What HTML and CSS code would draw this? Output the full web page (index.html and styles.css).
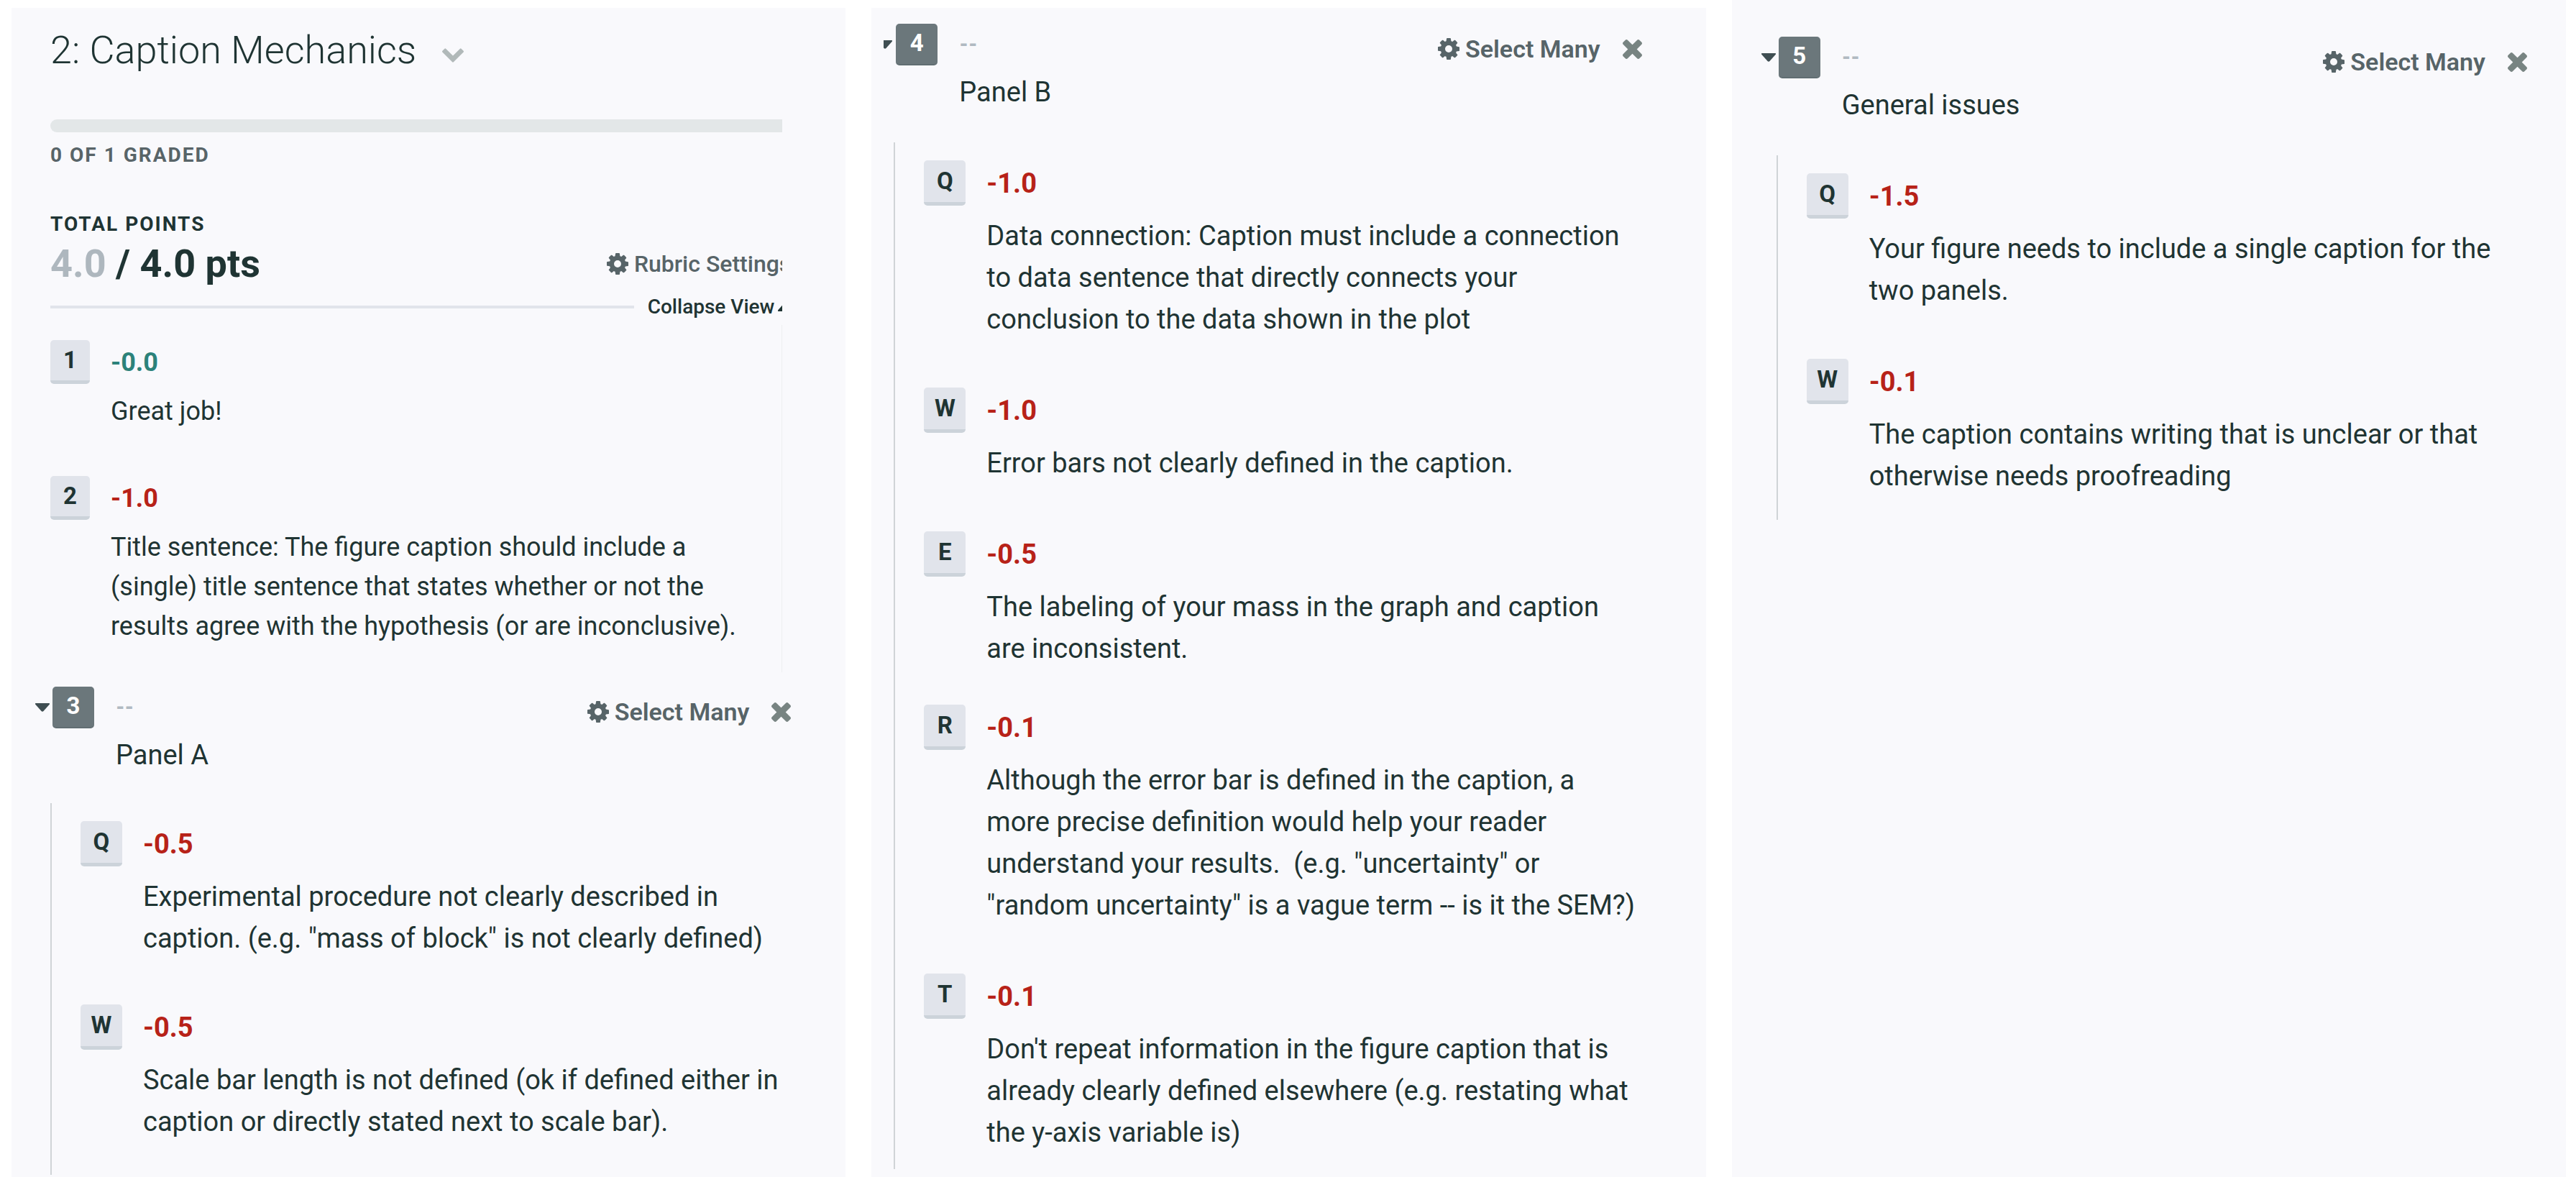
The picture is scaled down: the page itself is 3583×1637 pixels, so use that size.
FILE: index.html
```html
<!DOCTYPE html>
<html lang="en">
<head>
<meta charset="utf-8">
<title>2: Caption Mechanics</title>
<link rel="stylesheet" href="styles.css">
</head>
<body>
<svg class="sprite" aria-hidden="true">
  <symbol id="gear" viewBox="128 128 1536 1536"><path d="M1152 896q0-106-75-181t-181-75-181 75-75 181 75 181 181 75 181-75 75-181zm512-109v222q0 12-8 23t-20 13l-185 28q-19 54-39 91 35 50 107 138 10 12 10 25t-9 23q-27 37-99 108t-94 71q-12 0-26-9l-138-108q-44 23-91 38-16 136-29 186-7 28-36 28h-222q-14 0-24.500-8.500t-11.500-21.500l-28-184q-49-16-90-37l-141 107q-10 9-25 9-14 0-25-11-126-114-165-168-7-10-7-23 0-12 8-23 15-21 51-66.500t54-70.500q-27-50-41-99l-183-27q-13-2-21-12.500t-8-23.500v-222q0-12 8-23t19-13l186-28q14-46 39-92-40-57-107-138-10-12-10-24 0-10 9-23 26-36 98.500-107.500t94.500-71.500q13 0 26 10l138 107q44-23 91-38 16-136 29-186 7-28 36-28h222q14 0 24.500 8.500t11.500 21.500l28 184q49 16 90 37l142-107q9-9 24-9 13 0 25 10 129 119 165 170 7 8 7 22 0 12-8 23-15 21-51 66.500t-54 70.500q26 50 41 98l183 28q13 2 21 12.500t8 23.500z"/></symbol>
  <symbol id="times" viewBox="302 366 1188 1188"><path d="M1490 1322q0 40-28 68l-136 136q-28 28-68 28t-68-28l-294-294-294 294q-28 28-68 28t-68-28l-136-136q-28-28-28-68t28-68l294-294-294-294q-28-28-28-68t28-68l136-136q28-28 68-28t68 28l294 294 294-294q28-28 68-28t68 28l136 136q28 28 28 68t-28 68l-294 294 294 294q28 28 28 68z"/></symbol>
  <symbol id="chevron" viewBox="90 533 1612 1035"><path d="M1683 808l-742 741q-19 19-45 19t-45-19l-742-741q-19-19-19-45.500t19-45.500l166-165q19-19 45-19t45 19l531 531 531-531q19-19 45-19t45 19l166 165q19 19 19 45.500t-19 45.500z"/></symbol>
  <symbol id="caret" viewBox="0 0 20 12"><path d="M1 0h18q2 0 .500 2L11.500 11q-1.500 1.500-3 0L.500 2Q-1 0 1 0z"/></symbol>
</svg>

<main class="board">
  <section class="panel panel--first">
    <div class="summary">
      <div class="summary-inner">
        <h1 class="title">2: Caption Mechanics
          <button class="icon-button title-menu" aria-label="Choose question"><svg class="chevron"><use href="#chevron"/></svg></button>
        </h1>
        <div class="progress" role="progressbar" aria-label="Graded" aria-valuemin="0" aria-valuemax="1" aria-valuenow="0"></div>
        <p class="label label--muted">0 OF 1 GRADED</p>
        <h2 class="label label--total">TOTAL POINTS</h2>
        <div class="points-row">
          <p class="points"><span class="points-earned">4.0</span> / 4.0 pts</p>
          <button class="text-button text-button--settings"><svg class="gear"><use href="#gear"/></svg>Rubric Settings</button>
        </div>
        <div class="divider-row">
          <span class="divider"></span>
          <button class="collapse">Collapse View <svg class="collapse-caret"><use href="#caret"/></svg></button>
        </div>
      </div>
    </div>

    <div class="top-items">
      <article class="item item--top">
        <button class="key">1</button>
        <div class="item-body"><p class="score score--zero">-0.0</p><p class="text">Great job!</p></div>
      </article>
      <article class="item item--top">
        <button class="key">2</button>
        <div class="item-body"><p class="score">-1.0</p><p class="text">Title sentence: The figure caption should include a<br>(single) title sentence that states whether or not the<br>results agree with the hypothesis (or are inconclusive).</p></div>
      </article>
    </div>

    <section class="group">
      <header class="group-header">
        <button class="icon-button toggle" aria-label="Collapse group 3"><svg class="caret"><use href="#caret"/></svg></button>
        <button class="key key--group">3</button>
        <div class="group-name"><p class="group-score">--</p><h3 class="text">Panel A</h3></div>
        <div class="actions">
          <button class="text-button"><svg class="gear"><use href="#gear"/></svg>Select Many</button>
          <button class="icon-button" aria-label="Delete group 3"><svg class="times"><use href="#times"/></svg></button>
        </div>
      </header>
      <div class="items">
        <article class="item">
          <button class="key">Q</button>
          <div class="item-body"><p class="score">-0.5</p><p class="text">Experimental procedure not clearly described in<br>caption. (e.g. "mass of block" is not clearly defined)</p></div>
        </article>
        <article class="item">
          <button class="key">W</button>
          <div class="item-body"><p class="score">-0.5</p><p class="text">Scale bar length is not defined (ok if defined either in<br>caption or directly stated next to scale bar).</p></div>
        </article>
      </div>
    </section>
  </section>

  <section class="panel panel--second">
    <section class="group">
      <header class="group-header">
        <button class="icon-button toggle toggle--cut" aria-label="Collapse group 4"><svg class="caret"><use href="#caret"/></svg></button>
        <button class="key key--group">4</button>
        <div class="group-name"><p class="group-score">--</p><h3 class="text">Panel B</h3></div>
        <div class="actions">
          <button class="text-button"><svg class="gear"><use href="#gear"/></svg>Select Many</button>
          <button class="icon-button" aria-label="Delete group 4"><svg class="times"><use href="#times"/></svg></button>
        </div>
      </header>
      <div class="items">
        <article class="item">
          <button class="key">Q</button>
          <div class="item-body"><p class="score">-1.0</p><p class="text">Data connection: Caption must include a connection<br>to data sentence that directly connects your<br>conclusion to the data shown in the plot</p></div>
        </article>
        <article class="item">
          <button class="key">W</button>
          <div class="item-body"><p class="score">-1.0</p><p class="text">Error bars not clearly defined in the caption.</p></div>
        </article>
        <article class="item item--close">
          <button class="key">E</button>
          <div class="item-body"><p class="score">-0.5</p><p class="text">The labeling of your mass in the graph and caption<br>are inconsistent.</p></div>
        </article>
        <article class="item">
          <button class="key">R</button>
          <div class="item-body"><p class="score">-0.1</p><p class="text">Although the error bar is defined in the caption, a<br>more precise definition would help your reader<br>understand your results.&nbsp; (e.g. "uncertainty" or<br>"random uncertainty" is a vague term -- is it the SEM?)</p></div>
        </article>
        <article class="item">
          <button class="key">T</button>
          <div class="item-body"><p class="score">-0.1</p><p class="text">Don't repeat information in the figure caption that is<br>already clearly defined elsewhere (e.g. restating what<br>the y-axis variable is)</p></div>
        </article>
      </div>
    </section>
  </section>

  <section class="panel panel--third">
    <section class="group">
      <header class="group-header">
        <button class="icon-button toggle" aria-label="Collapse group 5"><svg class="caret"><use href="#caret"/></svg></button>
        <button class="key key--group">5</button>
        <div class="group-name"><p class="group-score">--</p><h3 class="text">General issues</h3></div>
        <div class="actions">
          <button class="text-button"><svg class="gear"><use href="#gear"/></svg>Select Many</button>
          <button class="icon-button" aria-label="Delete group 5"><svg class="times"><use href="#times"/></svg></button>
        </div>
      </header>
      <div class="items">
        <article class="item">
          <button class="key">Q</button>
          <div class="item-body"><p class="score">-1.5</p><p class="text">Your figure needs to include a single caption for the<br>two panels.</p></div>
        </article>
        <article class="item">
          <button class="key">W</button>
          <div class="item-body"><p class="score">-0.1</p><p class="text">The caption contains writing that is unclear or that<br>otherwise needs proofreading</p></div>
        </article>
      </div>
    </section>
  </section>
</main>
</body>
</html>
```
FILE: styles.css
```css
* {
  box-sizing: border-box;
}

body {
  margin: 0;
  background: #fff;
  color: #1f3433;
  font-family: Roboto, "Liberation Sans", sans-serif;
  font-size: 38px;
  line-height: 58px;
}

h1, h2, h3, p {
  margin: 0;
  font-weight: 400;
}

button {
  margin: 0;
  padding: 0;
  border: 0;
  background: none;
  color: inherit;
  font: inherit;
  cursor: pointer;
}

svg {
  display: block;
  flex: none;
  fill: currentColor;
}

.sprite {
  position: absolute;
  width: 0;
  height: 0;
}

.icon-button {
  display: flex;
  color: #788482;
}

.board {
  display: grid;
  grid-template-columns: repeat(3, minmax(0, 1fr));
  gap: 36px;
  min-height: 100vh;
  padding: 0 14px 0 16px;
}

.panel {
  --header-gap: 41px;
  --item-gap: 66px;
  --list-end: 32px;
  margin-top: 11px;
  background: #f9f9fc;
  white-space: nowrap;
}

.panel--first {
  --header-gap: 38px;
  --item-gap: 63px;
  --list-end: 45px;
  padding: 27px 76px 0 33px;
}

.panel--second {
  --list-end: 22px;
  padding: 22px 89px 0 17px;
}

.panel--third {
  margin-top: 0;
  padding: 51px 54px 0 41px;
}

/* Question summary: the content runs on past the visible edge */
.summary,
.top-items {
  margin: 0 12px 0 21px;
}

.summary {
  overflow: hidden;
}

.summary-inner {
  width: calc(100% + 12px);
}

.title {
  display: flex;
  align-items: center;
  gap: 36px;
  font-size: 54px;
  font-weight: 300;
  line-height: 64px;
}

.title-menu {
  padding-top: 14px;
  color: #b1b9b9;
}

.chevron {
  width: 30px;
  height: 20px;
}

.progress {
  height: 18px;
  margin: 64px 0 16px;
  border-radius: 9px;
  background: #e3e7e8;
}

.label {
  font-size: 28px;
  font-weight: 700;
  line-height: 32px;
  letter-spacing: 2px;
}

.label--muted {
  color: #586468;
}

.label--total {
  margin: 64px 0 7px;
}

.points-row {
  display: flex;
  align-items: center;
  justify-content: space-between;
}

.points {
  font-size: 54px;
  font-weight: 700;
  line-height: 64px;
}

.points-earned {
  color: #aeb7be;
}

.text-button {
  display: flex;
  align-items: center;
  gap: 8px;
  color: #576468;
  font-size: 34px;
  font-weight: 600;
  line-height: 48px;
}

.text-button--settings {
  font-size: 32px;
  font-weight: 500;
}

.gear {
  width: 30px;
  height: 30px;
}

.divider-row {
  display: flex;
  align-items: center;
  gap: 19px;
  margin-top: 12px;
}

.divider {
  flex: 1;
  height: 4px;
  background: #e1e4eb;
}

.collapse {
  display: flex;
  align-items: center;
  gap: 5px;
  font-size: 28px;
  font-weight: 500;
  line-height: 32px;
}

.collapse-caret {
  width: 18px;
  height: 11px;
  transform: rotate(180deg);
}

.top-items {
  margin-top: 9px;
  margin-bottom: 20px;
  padding: 21px 0 36px;
  border-right: 1px solid #edeff1;
}

/* Rubric items */
.item {
  display: flex;
  align-items: flex-start;
  gap: 29px;
}

.item + .item {
  margin-top: var(--item-gap);
}

.item--close + .item {
  margin-top: 49px;
}

.key {
  flex: none;
  width: 58px;
  height: 63px;
  border-bottom: 5px solid #ccd3da;
  border-radius: 5px;
  background: #e1e4eb;
  font-size: 33px;
  font-weight: 700;
  line-height: 58px;
}

.key--group {
  height: 58px;
  padding-bottom: 2px;
  border-bottom: 2px solid #616e72;
  background: #6b777b;
  color: #fff;
  line-height: 54px;
}

.score {
  margin: 8px 0 20px;
  color: #b72218;
  font-weight: 700;
  line-height: 48px;
}

.score--zero {
  color: #2c827a;
}

.text {
  font-size: inherit;
}

.item--top {
  font-size: 36px;
  line-height: 55px;
}

.item--top .key {
  width: 55px;
  height: 61px;
  line-height: 56px;
}

.item--top .score {
  margin-bottom: 18px;
  line-height: 46px;
}

.item--top + .item--top {
  margin-top: 62px;
}

/* Groups */
.group-header {
  display: flex;
  align-items: flex-start;
  margin-bottom: var(--header-gap);
}

.toggle {
  width: 20px;
  margin: 23px 4px 0 0;
  color: #3f4e52;
}

.toggle--cut {
  justify-content: flex-end;
  width: 12px;
  margin-right: 5px;
  overflow: hidden;
}

.caret {
  width: 20px;
  height: 12px;
}

.group-name {
  flex: 1;
  padding: 5px 0 0 30px;
}

.group-score {
  margin-bottom: 13px;
  color: #b0b9c1;
  font-size: 28px;
  font-weight: 900;
  line-height: 48px;
}

.actions {
  display: flex;
  align-items: center;
  gap: 31px;
  padding-top: 11px;
}

.times {
  width: 27px;
  height: 27px;
}

.items {
  margin-left: 21px;
  padding: 25px 0 var(--list-end) 40px;
  border-left: 2px solid #d0d4d7;
}

.panel--second .items {
  margin-left: 14px;
}
```
